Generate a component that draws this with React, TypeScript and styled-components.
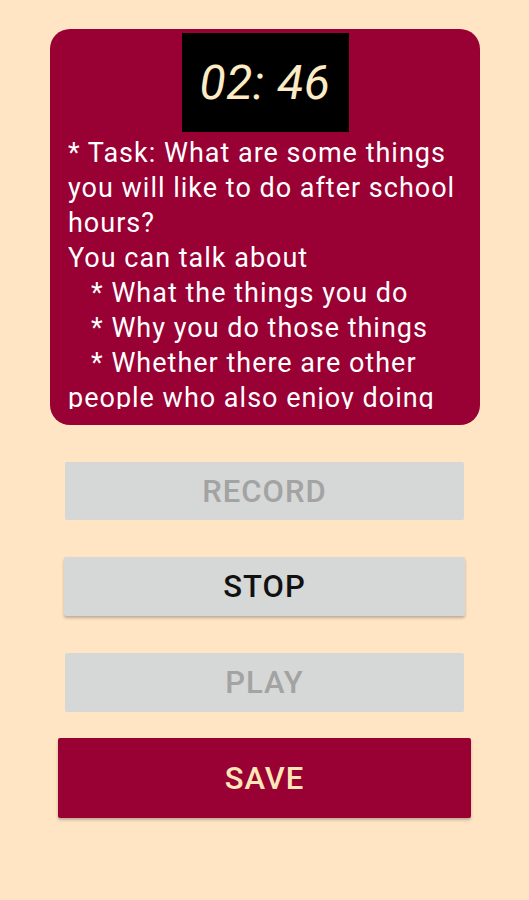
import React from 'react';
import styled, { createGlobalStyle } from 'styled-components';

const GlobalStyle = createGlobalStyle`
  body {
    margin: 0;
    background: #ffe5c4;
    font-family: Roboto, 'Liberation Sans', sans-serif;
  }
`;

const Page = styled.div`
  width: 529px;
  min-height: 900px;
  display: flex;
  flex-direction: column;
  align-items: center;
  padding-top: 29px;
  box-sizing: border-box;
`;

const TaskCard = styled.div`
  width: 430px;
  height: 396px;
  box-sizing: border-box;
  background: #990033;
  border-radius: 20px;
  padding: 4px 6px 16px 18px;
  display: flex;
  flex-direction: column;
  align-items: center;
  margin-left: 1px;
`;

const Timer = styled.div`
  width: 167px;
  height: 99px;
  background: #000;
  color: #fcebc4;
  font-size: 48px;
  font-style: italic;
  letter-spacing: 0.5px;
  display: flex;
  align-items: center;
  justify-content: center;
  flex-shrink: 0;
  margin-left: -12px;
`;

const TaskText = styled.div`
  align-self: stretch;
  margin-top: 4px;
  height: 273px;
  overflow: hidden;
  color: #fff;
  font-size: 27px;
  letter-spacing: 1px;
  line-height: 35px;
  white-space: pre-wrap;
`;

const Controls = styled.div`
  display: flex;
  flex-direction: column;
  align-items: center;
  margin-top: 37px;
`;

type Variant = 'idle' | 'active' | 'primary';

const ActionButton = styled.button<{ $variant: Variant; $height: number; $gap: number }>`
  border: none;
  border-radius: 2px;
  padding: 0;
  font-family: Roboto, 'Liberation Sans', sans-serif;
  font-size: 31px;
  font-weight: 500;
  letter-spacing: 1px;
  text-transform: uppercase;
  cursor: pointer;
  width: ${(p) => (p.$variant === 'primary' ? '413px' : p.$variant === 'active' ? '401px' : '399px')};
  height: ${(p) => p.$height}px;
  margin-bottom: ${(p) => p.$gap}px;
  background: ${(p) => (p.$variant === 'primary' ? '#990033' : '#d6d7d7')};
  color: ${(p) => (p.$variant === 'primary' ? '#ffe6b8' : p.$variant === 'active' ? '#111' : '#a3a3a3')};
  box-shadow: ${(p) => (p.$variant === 'idle' ? 'none' : '0 2px 3px rgba(0, 0, 0, 0.25)')};
`;

const taskText = `* Task: What are some things you will like to do after school hours?
You can talk about
   * What the things you do
   * Why you do those things
   * Whether there are other people who also enjoy doing those things`;

export default function App() {
  return (
    <>
      <GlobalStyle />
      <Page>
        <TaskCard>
          <Timer>02: 46</Timer>
          <TaskText>{taskText}</TaskText>
        </TaskCard>
        <Controls>
          <ActionButton $variant="idle" $height={58} $gap={37} disabled>Record</ActionButton>
          <ActionButton $variant="active" $height={59} $gap={37}>Stop</ActionButton>
          <ActionButton $variant="idle" $height={59} $gap={26} disabled>Play</ActionButton>
          <ActionButton $variant="primary" $height={80} $gap={0}>Save</ActionButton>
        </Controls>
      </Page>
    </>
  );
}
